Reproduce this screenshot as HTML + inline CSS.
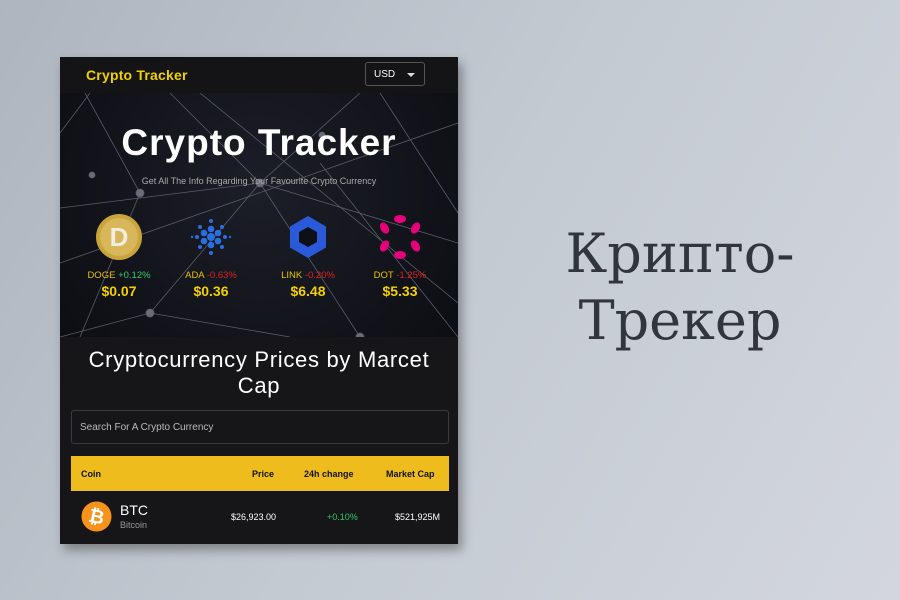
<!DOCTYPE html>
<html><head><meta charset="utf-8"><style>
*{margin:0;padding:0;box-sizing:border-box}
body{width:900px;height:600px;overflow:hidden;background:linear-gradient(120deg,#aeb5bf 0%,#c4cad2 50%,#d3d7dd 100%);font-family:"Liberation Sans",sans-serif;position:relative}
.panel{position:absolute;left:60px;top:57px;width:398px;height:487px;background:#161619;box-shadow:4px 6px 10px rgba(0,0,0,.35);overflow:hidden}
.hdr{height:36px;background:#141416;position:relative}
.logo{position:absolute;left:26px;top:10px;color:#f0d000;font-weight:bold;font-size:14px;letter-spacing:0.2px}
.sel{position:absolute;left:305px;top:5px;width:60px;height:24px;border:1px solid #555;border-radius:3px;color:#fff;font-size:10px;padding:6px 0 0 8px}
.sel:after{content:"";position:absolute;right:9px;top:10px;border:4px solid transparent;border-top:4px solid #ddd}
.hero{position:absolute;top:36px;left:0;width:398px;height:244px;background:radial-gradient(circle at 50% 40%,#1c1e28,#0d0e13)}
.hero svg.bg{position:absolute;left:0;top:0}
h1{position:absolute;top:29px;width:100%;text-align:center;color:#fff;font-size:37px;font-weight:bold;letter-spacing:1px}
.sub{position:absolute;top:83px;width:100%;text-align:center;color:#aaa;font-size:9px}
.coin{position:absolute;top:120px;width:100px;text-align:center}
.coin svg{display:block;margin:0 auto}
.coin .n{font-size:9.5px;color:#e6c200;margin-top:9px}
.coin .p{font-size:14px;font-weight:bold;color:#f3d000;margin-top:2px}
.g{color:#2ecc71}.r{color:#e02020}
h2{position:absolute;top:290px;width:100%;text-align:center;color:#fff;font-weight:normal;font-size:22px;line-height:26px;letter-spacing:.7px}
.search{position:absolute;left:11px;top:353px;width:378px;height:34px;border:1px solid #3a3a3e;border-radius:3px;color:#bbb;font-size:10px;padding:11px 8px}
.th{position:absolute;left:11px;top:399px;width:378px;height:35px;background:#eebc1d;font-size:9px;font-weight:bold;color:#111}
.th span,.row span{position:absolute;top:13px}
.row{position:absolute;left:11px;top:434px;width:378px;height:50px;font-size:9px;color:#fff}
</style></head><body>
<div class="panel">
<div class="hdr"><div class="logo">Crypto Tracker</div><div class="sel">USD</div></div>
<div class="hero">
<svg class="bg" width="398" height="244" stroke="#5a5d6a" stroke-width="0.8" fill="#6a6d78">
<line x1="25" y1="0" x2="80" y2="100"/><line x1="0" y1="115" x2="200" y2="90"/><line x1="80" y1="100" x2="20" y2="244"/>
<line x1="200" y1="90" x2="110" y2="0"/><line x1="200" y1="90" x2="300" y2="0"/><line x1="200" y1="90" x2="90" y2="220"/>
<line x1="200" y1="90" x2="300" y2="244"/><line x1="200" y1="90" x2="398" y2="150"/><line x1="140" y1="0" x2="398" y2="210"/>
<line x1="0" y1="170" x2="398" y2="30"/><line x1="90" y1="220" x2="0" y2="244"/><line x1="90" y1="220" x2="230" y2="244"/>
<line x1="320" y1="0" x2="398" y2="120"/><line x1="30" y1="0" x2="0" y2="40"/><line x1="260" y1="70" x2="398" y2="244"/>
<circle cx="80" cy="100" r="4"/><circle cx="200" cy="90" r="4"/><circle cx="90" cy="220" r="4"/><circle cx="32" cy="82" r="3"/><circle cx="300" cy="244" r="4"/><circle cx="262" cy="42" r="3"/>
</svg>
<h1>Crypto Tracker</h1>
<div class="sub">Get All The Info Regarding Your Favourite Crypto Currency</div>
<div class="coin" style="left:9px"><svg width="48" height="48"><circle cx="24" cy="24" r="23" fill="#c9a43a"/><circle cx="24" cy="24" r="19" fill="#d8b65a"/><text x="24" y="33" font-size="26" font-weight="bold" fill="#f3ece0" text-anchor="middle" font-family="Liberation Sans">D</text></svg><div class="n">DOGE <span class="g">+0.12%</span></div><div class="p">$0.07</div></div>
<div class="coin" style="left:101px"><svg width="48" height="48" fill="#2a6fe0"><circle cx="24" cy="24" r="4"/><circle cx="17" cy="20" r="3.3"/><circle cx="31" cy="20" r="3.3"/><circle cx="17" cy="28" r="3.3"/><circle cx="31" cy="28" r="3.3"/><circle cx="24" cy="16" r="3.3"/><circle cx="24" cy="32" r="3.3"/><circle cx="10" cy="24" r="2"/><circle cx="38" cy="24" r="2"/><circle cx="13" cy="14" r="2"/><circle cx="35" cy="14" r="2"/><circle cx="13" cy="34" r="2"/><circle cx="35" cy="34" r="2"/><circle cx="24" cy="8" r="2"/><circle cx="24" cy="40" r="2"/><circle cx="5" cy="24" r="1.2"/><circle cx="43" cy="24" r="1.2"/></svg><div class="n">ADA <span class="r">-0.63%</span></div><div class="p">$0.36</div></div>
<div class="coin" style="left:198px"><svg width="48" height="48"><polygon points="24,3 42,13.5 42,34.5 24,45 6,34.5 6,13.5" fill="#2a5ada"/><polygon points="24,14 33,19 33,29 24,34 15,29 15,19" fill="#0e1018"/></svg><div class="n">LINK <span class="r">-0.20%</span></div><div class="p">$6.48</div></div>
<div class="coin" style="left:290px"><svg width="48" height="48" fill="#e6007a"><ellipse cx="24" cy="6" rx="6" ry="4"/><ellipse cx="24" cy="42" rx="6" ry="4"/><ellipse cx="8.5" cy="15" rx="4" ry="6" transform="rotate(-30 8.5 15)"/><ellipse cx="39.5" cy="15" rx="4" ry="6" transform="rotate(30 39.5 15)"/><ellipse cx="8.5" cy="33" rx="4" ry="6" transform="rotate(30 8.5 33)"/><ellipse cx="39.5" cy="33" rx="4" ry="6" transform="rotate(-30 39.5 33)"/></svg><div class="n">DOT <span class="r">-1.25%</span></div><div class="p">$5.33</div></div>
</div>
<h2>Cryptocurrency Prices by Marcet<br>Cap</h2>
<div class="search">Search For A Crypto Currency</div>
<div class="th"><span style="left:10px">Coin</span><span style="left:181px">Price</span><span style="left:233px">24h change</span><span style="left:315px">Market Cap</span></div>
<div class="row">
<svg style="position:absolute;left:10px;top:10px" width="31" height="31"><circle cx="15.5" cy="15.5" r="15" fill="#f7931a"/><text x="15.5" y="22" font-size="19" font-weight="bold" fill="#fff" text-anchor="middle" font-family="Liberation Sans" transform="rotate(12 15.5 15.5)">₿</text></svg>
<span style="left:49px;top:11px;font-size:14px">BTC</span>
<span style="left:49px;top:29px;color:#999;font-size:9px">Bitcoin</span>
<span style="left:160px;top:21px">$26,923.00</span>
<span style="left:256px;top:21px;color:#2ecc71">+0.10%</span>
<span style="left:324px;top:21px">$521,925M</span>
</div>
</div>
<div style="position:absolute;left:520px;top:220px;width:320px;text-align:center;font-family:'DejaVu Serif','Liberation Serif',serif;font-size:54px;line-height:67px;color:#33353c">Крипто-<br>Трекер</div>
</body></html>
